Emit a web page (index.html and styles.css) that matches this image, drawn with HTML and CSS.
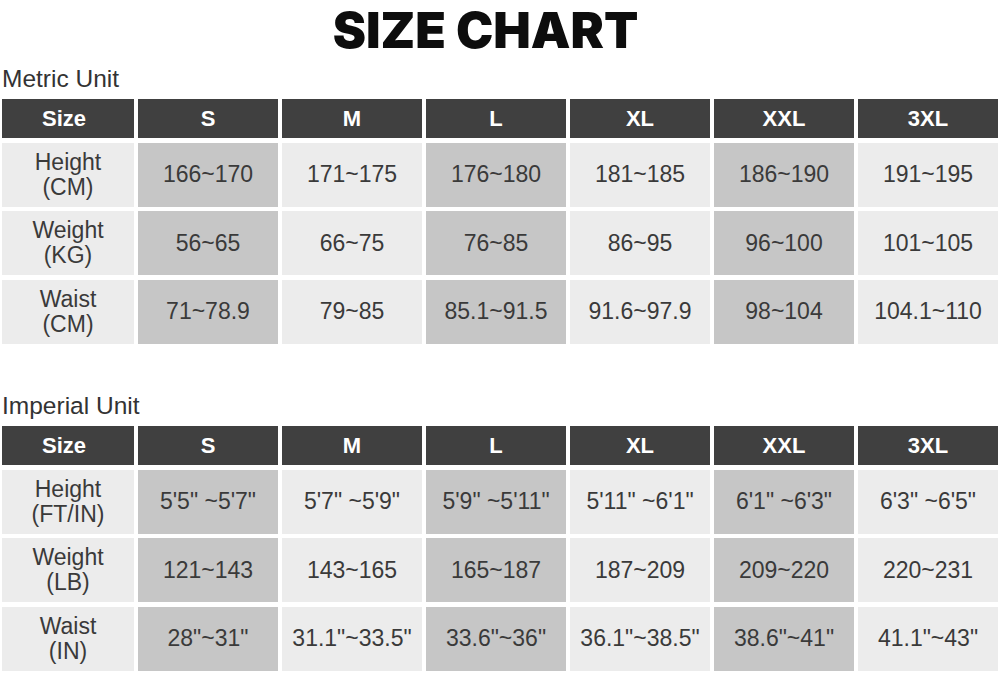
FILE: index.html
```html
<!DOCTYPE html>
<html lang="en">
<head>
<meta charset="utf-8">
<title>Size Chart</title>
<link rel="stylesheet" href="styles.css">
</head>
<body>
<div class="page">
  <h1 class="title">SIZE CHART</h1>

  <section class="unit">
    <h2 class="unit-label">Metric Unit</h2>
    <div class="chart">
      <div class="hd">Size</div><div class="hd">S</div><div class="hd">M</div><div class="hd">L</div><div class="hd">XL</div><div class="hd">XXL</div><div class="hd">3XL</div>
      <div class="lb">Height<br>(CM)</div><div class="c dk">166~170</div><div class="c">171~175</div><div class="c dk">176~180</div><div class="c">181~185</div><div class="c dk">186~190</div><div class="c">191~195</div>
      <div class="lb">Weight<br>(KG)</div><div class="c dk">56~65</div><div class="c">66~75</div><div class="c dk">76~85</div><div class="c">86~95</div><div class="c dk">96~100</div><div class="c">101~105</div>
      <div class="lb">Waist<br>(CM)</div><div class="c dk">71~78.9</div><div class="c">79~85</div><div class="c dk">85.1~91.5</div><div class="c">91.6~97.9</div><div class="c dk">98~104</div><div class="c">104.1~110</div>
    </div>
  </section>

  <section class="unit imperial">
    <h2 class="unit-label">Imperial Unit</h2>
    <div class="chart">
      <div class="hd">Size</div><div class="hd">S</div><div class="hd">M</div><div class="hd">L</div><div class="hd">XL</div><div class="hd">XXL</div><div class="hd">3XL</div>
      <div class="lb">Height<br>(FT/IN)</div><div class="c dk">5'5" ~5'7"</div><div class="c">5'7" ~5'9"</div><div class="c dk">5'9" ~5'11"</div><div class="c">5'11" ~6'1"</div><div class="c dk">6'1" ~6'3"</div><div class="c">6'3" ~6'5"</div>
      <div class="lb">Weight<br>(LB)</div><div class="c dk">121~143</div><div class="c">143~165</div><div class="c dk">165~187</div><div class="c">187~209</div><div class="c dk">209~220</div><div class="c">220~231</div>
      <div class="lb">Waist<br>(IN)</div><div class="c dk">28"~31"</div><div class="c">31.1"~33.5"</div><div class="c dk">33.6"~36"</div><div class="c">36.1"~38.5"</div><div class="c dk">38.6"~41"</div><div class="c">41.1"~43"</div>
    </div>
  </section>
</div>
</body>
</html>
```
FILE: styles.css
```css
html, body {
  margin: 0;
  padding: 0;
  background: #ffffff;
}

.page {
  width: 1000px;
  padding: 0 2px;
  box-sizing: border-box;
  font-family: "Liberation Sans", Arial, sans-serif;
  color: #3a3a3a;
}

.title {
  margin: 0;
  height: 61px;
  padding: 0 29px 0 0;
  box-sizing: border-box;
  line-height: 61px;
  font-family: Inter, "DejaVu Sans", sans-serif;
  font-weight: 900;
  font-size: 50px;
  letter-spacing: 0;
  text-align: center;
  color: #0d0d0d;
}

.unit-label {
  margin: 0;
  padding-bottom: 3px;
  line-height: 35px;
  font-size: 24.5px;
  font-weight: normal;
  color: #333333;
}

.imperial {
  margin-top: 44.5px;
}

.chart {
  display: grid;
  grid-template-columns: 132px repeat(6, 140px);
  grid-template-rows: 39px repeat(3, 64px);
  column-gap: 4px;
  row-gap: 4.5px;
}

.hd {
  display: flex;
  align-items: center;
  justify-content: center;
  background: #404040;
  color: #ffffff;
  font-weight: bold;
  font-size: 22px;
}

.hd:first-child {
  padding-right: 8px;
}

.lb,
.c {
  display: flex;
  align-items: center;
  justify-content: center;
  text-align: center;
  background: #ececec;
  font-size: 23px;
}

.lb {
  line-height: 25px;
}

.c.dk {
  background: #c6c6c6;
}
```
